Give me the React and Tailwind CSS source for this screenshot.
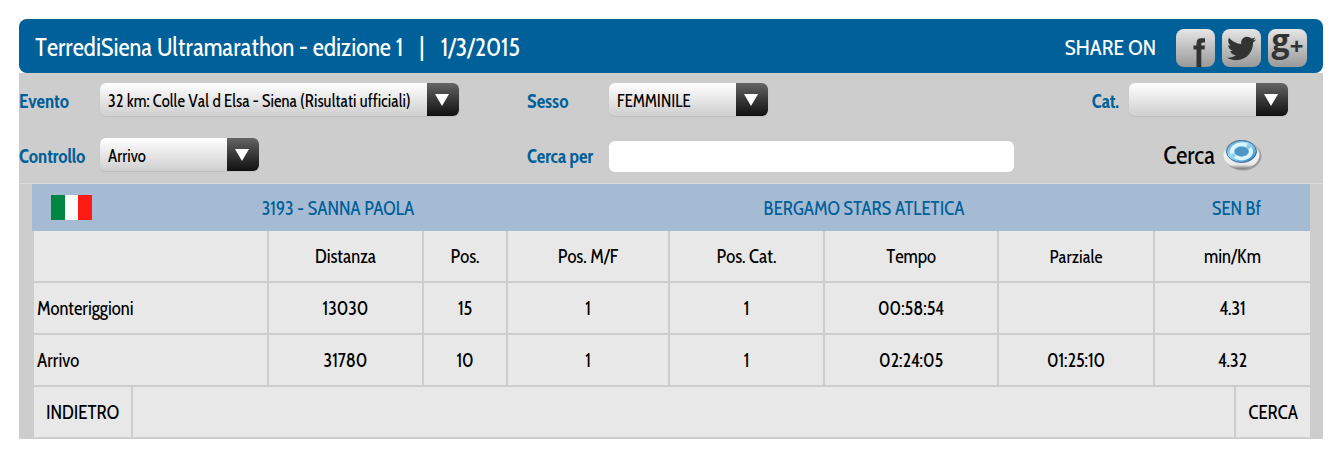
import React, { useState } from 'react';
import { FaTwitter } from 'react-icons/fa';

const COLUMNS = [
  { label: '', width: 'w-[235px]' },
  { label: 'Distanza', width: 'w-[155px]' },
  { label: 'Pos.', width: 'w-[84px]' },
  { label: 'Pos. M/F', width: 'w-[162px]' },
  { label: 'Pos. Cat.', width: 'w-[155px]' },
  { label: 'Tempo', width: 'w-[174px]' },
  { label: 'Parziale', width: 'w-[156px] border-l-0 text-lg' },
  { label: 'min/Km', width: 'w-[157px]' },
];

const SPLITS = [
  ['Monteriggioni', '13030', '15', '1', '1', '00:58:54', '', '4.31'],
  ['Arrivo', '31780', '10', '1', '1', '02:24:05', '01:25:10', '4.32'],
];

const SelectBox = ({ id, options, width }) => (
  <div className={`relative h-[33px] ${width}`}>
    <select
      id={id}
      className="block h-full w-full appearance-none rounded-md bg-linear-to-b from-white to-[#cfcfcf] pt-0.5 pr-9 pl-2 text-[17px] leading-6 text-black shadow-[0_1px_1px_#bdbdbd] [font-kerning:none]"
    >
      {options.map((option) => (
        <option key={option}>{option}</option>
      ))}
    </select>
    <span className="pointer-events-none absolute inset-y-0 right-0 flex w-8 items-center justify-center rounded-r-md bg-linear-to-b from-[#666] to-[#111] pr-0.5">
      <svg width="14" height="12" viewBox="0 0 14 12" aria-hidden="true">
        <path d="M0 0h14L7 12z" fill="#fff" />
      </svg>
    </span>
  </div>
);

const FieldLabel = ({ htmlFor, children }) => (
  <label htmlFor={htmlFor} className="pt-1 text-[19px] leading-6 font-bold whitespace-nowrap text-[#006099]">
    {children}
  </label>
);

const ShareLink = ({ label, children }) => (
  <a
    href="#share"
    aria-label={label}
    className="flex h-[38px] w-[39px] items-center justify-center rounded-lg bg-linear-to-b from-[#e6e6e6] to-[#999] text-[#333]"
  >
    {children}
  </a>
);

const FacebookGlyph = () => (
  <svg width="39" height="38" viewBox="0 0 39 38" fill="currentColor" aria-hidden="true">
    <path d="M20.5 38V20.5H17.5V16.5H20.5V14.5C20.5 11 22 9.3 25.3 9.3H29V13.5H27C25.6 13.5 25.3 14.2 25.3 15.4V16.5H29L28.5 20.5H25.3V38Z" />
  </svg>
);

const SearchOrb = () => (
  <svg width="39" height="32" viewBox="0 0 39 32" aria-hidden="true">
    <defs>
      <linearGradient id="orbRim" x1="0" y1="0" x2="0" y2="1">
        <stop offset="0" stopColor="#8f9499" />
        <stop offset="0.5" stopColor="#f4f4f4" />
        <stop offset="0.85" stopColor="#e9e9e9" />
        <stop offset="1" stopColor="#777" />
      </linearGradient>
      <linearGradient id="orbFace" x1="0" y1="0" x2="1" y2="1">
        <stop offset="0" stopColor="#5c93bb" />
        <stop offset="0.4" stopColor="#9fdcf5" />
        <stop offset="0.75" stopColor="#5aa6d8" />
        <stop offset="1" stopColor="#1d4387" />
      </linearGradient>
    </defs>
    <ellipse cx="20" cy="17" rx="18.5" ry="14.5" fill="#888" opacity="0.7" />
    <ellipse cx="18.5" cy="15.5" rx="18" ry="14.5" fill="url(#orbRim)" />
    <ellipse cx="18.5" cy="12.5" rx="15" ry="11" fill="url(#orbFace)" stroke="#3d6fa3" strokeWidth="1" />
    <ellipse cx="18.5" cy="12.5" rx="9.5" ry="7" fill="none" stroke="#d9f6ff" strokeWidth="4" strokeDasharray="20 4" />
    <ellipse cx="18.5" cy="12.5" rx="7" ry="5" fill="#4c97c4" />
  </svg>
);

const ItalianFlag = () => (
  <svg width="41" height="25" viewBox="0 0 41 25" role="img" aria-label="Italia">
    <path d="M0 0h14v25H0z" fill="#008542" />
    <path d="M14 0h13v25H14z" fill="#fff" />
    <path d="M27 0h14v25H27z" fill="#ff1a14" />
  </svg>
);

const App = () => {
  const [query, setQuery] = useState('');

  return (
    <main className="pt-[19px] pr-[11px] pb-5 pl-[19px] font-['Cabin_Condensed',Lato,sans-serif] text-black">
      <header>
        <div className="flex h-[54px] items-center justify-between rounded-lg bg-[#006099] px-4 text-white">
          <h1 className="flex gap-4 pt-0.5 text-[25px] leading-8 [font-kerning:none]">
            <span>TerrediSiena Ultramarathon - edizione 1</span>
            <span>|</span>
            <span>1/3/2015</span>
          </h1>
          <div className="flex items-center">
            <span className="mr-5 pt-1 text-[22px] leading-7">SHARE ON</span>
            <div className="flex gap-[7px] pt-1">
              <ShareLink label="Facebook">
                <FacebookGlyph />
              </ShareLink>
              <ShareLink label="Twitter">
                <FaTwitter size={29} />
              </ShareLink>
              <ShareLink label="Google Plus">
                <span className="pb-4 font-['Open_Sans',sans-serif] text-[32px] leading-8 font-bold">g</span>
                <span className="pb-1 font-['Open_Sans',sans-serif] text-2xl leading-6 font-bold">+</span>
              </ShareLink>
            </div>
          </div>
        </div>
      </header>

      <form
        className="grid grid-cols-[81px_427fr_82px_405fr_309px] grid-rows-[53px_57px] items-center bg-[#cdcdcd]"
        onSubmit={(e) => e.preventDefault()}
      >
        <FieldLabel htmlFor="evento">Evento</FieldLabel>
        <SelectBox id="evento" width="w-[359px]" options={['32 km: Colle Val d Elsa - Siena (Risultati ufficiali)']} />
        <FieldLabel htmlFor="sesso">Sesso</FieldLabel>
        <SelectBox id="sesso" width="w-[159px]" options={['FEMMINILE', 'MASCHILE']} />
        <div className="flex items-center justify-end gap-[10px] pr-[35px]">
          <FieldLabel htmlFor="categoria">Cat.</FieldLabel>
          <SelectBox id="categoria" width="w-[159px]" options={['', 'SEN Bf']} />
        </div>

        <FieldLabel htmlFor="controllo">Controllo</FieldLabel>
        <SelectBox id="controllo" width="w-[159px]" options={['Arrivo', 'Monteriggioni']} />
        <FieldLabel htmlFor="cerca">Cerca per</FieldLabel>
        <input
          id="cerca"
          type="text"
          value={query}
          onChange={(e) => setQuery(e.target.value)}
          className="mt-1 h-[31px] w-full rounded-md bg-white px-2 text-[17px]"
        />
        <div className="flex justify-end pr-[61px]">
          <button type="submit" className="flex items-center gap-2 text-[25px] leading-8">
            Cerca
            <SearchOrb />
          </button>
        </div>
      </form>

      <section className="border-t border-[#dadada] bg-[#cdcdcd] px-[13px]">
        <div className="flex h-[47px] items-center bg-[#a4bbd3] text-center text-[19px] leading-6 text-[#006099]">
          <div className="flex w-[79px] justify-center">
            <ItalianFlag />
          </div>
          <h2 className="flex-[454] pt-0.5">3193 - SANNA PAOLA</h2>
          <p className="flex-[598] pt-0.5">BERGAMO STARS ATLETICA</p>
          <p className="flex-[147] pt-0.5">SEN Bf</p>
        </div>

        <table className="w-full table-fixed border-separate border-spacing-0 text-center text-[19px] leading-6 [font-kerning:none]">
          <thead>
            <tr className="h-[52px]">
              {COLUMNS.map(({ label, width }) => (
                <th
                  key={label}
                  scope="col"
                  className={`border-b-2 border-l-2 border-[#cdcdcd] bg-[#e8e8e8] p-0 pt-0.5 font-normal ${width}`}
                >
                  {label}
                </th>
              ))}
            </tr>
          </thead>
          <tbody>
            {SPLITS.map((row) => (
              <tr key={row[0]} className="h-[52px]">
                {row.map((value, i) => (
                  <td
                    key={COLUMNS[i].label}
                    className="border-b-2 border-l-2 border-[#cdcdcd] bg-[#e8e8e8] p-0 pt-0.5 first:pl-[3px] first:text-left"
                  >
                    {value}
                  </td>
                ))}
              </tr>
            ))}
          </tbody>
        </table>

        <nav className="flex h-[52px] justify-between border-b-2 border-l-2 border-[#cdcdcd] bg-[#e8e8e8] text-[19px] leading-6">
          <button type="button" className="border-r-2 border-[#cdcdcd] px-3 pt-0.5">
            INDIETRO
          </button>
          <button type="button" className="border-l-2 border-[#cdcdcd] px-3 pt-0.5">
            CERCA
          </button>
        </nav>
      </section>
    </main>
  );
};

export default App;
